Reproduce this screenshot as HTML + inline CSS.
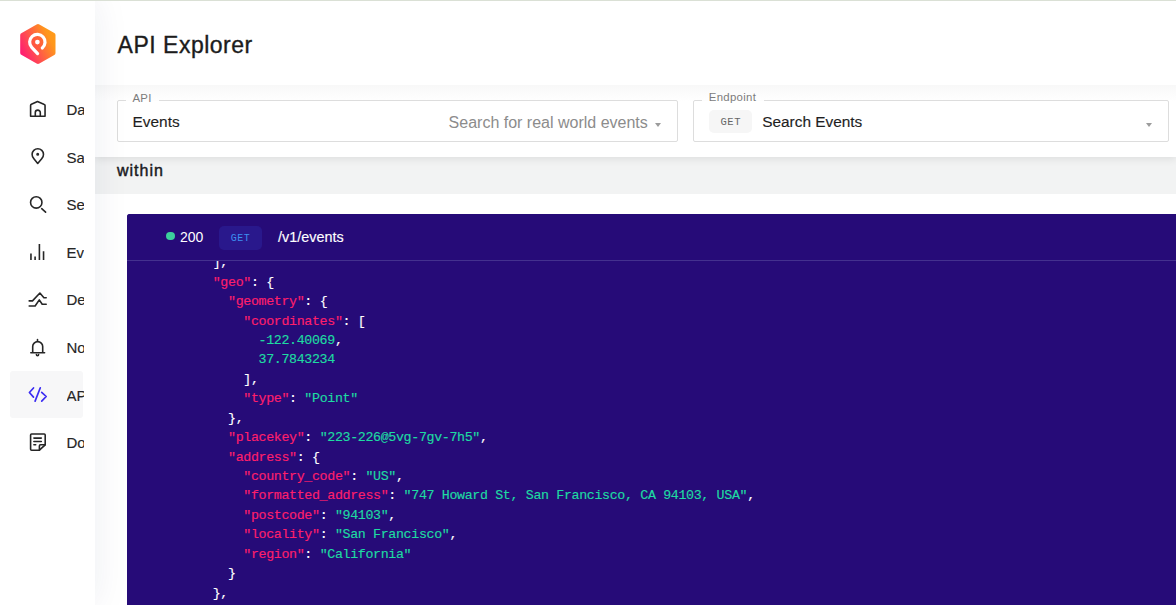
<!DOCTYPE html>
<html><head><meta charset="utf-8">
<style>
*{box-sizing:border-box;margin:0;padding:0}
html,body{width:1176px;height:605px;overflow:hidden;background:#fff;font-family:"Liberation Sans",sans-serif}
.topline{position:absolute;left:0;top:0;width:1176px;height:1px;background:#dae0d5;z-index:50}
#side{position:absolute;left:0;top:0;width:95px;height:605px;background:#fff;z-index:20;box-shadow:0 0 36px rgba(20,35,90,0.08)}
#logo{position:absolute;left:18px;top:22px;width:40px;height:44px}
.item{position:absolute;left:10px;width:73px;height:47px;overflow:hidden;border-radius:3px}
.item.active{background:#f7f7f8}
.item svg{position:absolute;left:17px;top:13px;width:20px;height:20px}
.lab{position:absolute;left:66.5px;width:17.2px;overflow:hidden;font-size:15px;line-height:14px;color:#262626;white-space:nowrap;margin-top:-1.25px;letter-spacing:0px;-webkit-text-stroke:0.15px #262626}
#main{position:absolute;left:95px;top:0;width:1081px;height:605px;background:#fff}
#hdr{position:absolute;left:0;top:0;width:1081px;height:157px;background:#fff;z-index:5;box-shadow:0 2px 8px rgba(0,0,0,0.09)}
#title{position:absolute;left:22.6px;top:31.6px;font-size:23px;color:#1c1c1c;letter-spacing:0.5px;-webkit-text-stroke:0.35px #1c1c1c}
#fields{position:absolute;left:0;top:85px;width:1081px;height:72px;background:linear-gradient(#f8f8f8,#fff 16px)}
#flayer{position:absolute;left:0;top:0;width:1176px;height:605px;z-index:8}
.fbox{position:absolute;border:1px solid #dddddd;border-radius:2px;background:#fff}
.notch{position:absolute;top:100px;height:1px;background:#fdfdfd}
.lbl{position:absolute;font-size:11.4px;line-height:11.4px;color:#7c7c7c;letter-spacing:0.3px;white-space:nowrap}
.val{position:absolute;font-size:15.4px;line-height:15.4px;color:#1f1f1f;white-space:nowrap;-webkit-text-stroke:0.15px #1f1f1f}
.ph{position:absolute;font-size:16px;line-height:16px;color:#8c8c8c;white-space:nowrap}
.arr{position:absolute;width:0;height:0;border-left:3.7px solid transparent;border-right:3.7px solid transparent;border-top:4.4px solid #9c9c9c}
.badge{position:absolute;width:43.2px;height:23px;background:#f6f6f6;border-radius:5px;font-family:"Liberation Mono",monospace;font-size:10.5px;color:#666;text-align:center;line-height:25px;letter-spacing:0.6px}
#band{position:absolute;left:0;top:157px;width:1081px;height:37px;background:#f2f3f3}
#within{position:absolute;left:22px;top:163px;font-size:16px;line-height:16px;color:#1a1a22;z-index:6;-webkit-text-stroke:0.45px #1a1a22;letter-spacing:1px}
#code{position:absolute;left:32px;top:214px;width:1100px;height:420px;background:#260b78;border-radius:3px;overflow:hidden}
#chdr{position:absolute;left:0;top:0;width:100%;height:47px;border-bottom:1px solid #44318f}
.dot{position:absolute;left:39.3px;top:17.7px;width:8.5px;height:8.5px;border-radius:50%;background:#3ccf9c}
.st{position:absolute;left:53px;top:15px;font-size:14px;color:#fff}
.gb{position:absolute;left:92px;top:12px;width:43px;height:24px;background:#29188c;border-radius:5px;font-family:"Liberation Mono",monospace;font-size:10px;color:#3c8ff0;text-align:center;line-height:25px;letter-spacing:0.5px}
.path{position:absolute;left:151px;top:15px;font-size:14.4px;color:#fff;-webkit-text-stroke:0.15px #fff}
#pre{position:absolute;left:55.2px;top:39.2px;font-family:"Liberation Mono",monospace;font-size:13.3px;letter-spacing:-0.345px;line-height:19.43px;color:#fff;white-space:pre;-webkit-text-stroke:0.15px}
.k{color:#ff1f6b}
.s{color:#1edba2}
</style></head><body>
<div class="topline"></div>
<div id="side">
  <svg id="logo" viewBox="0 0 40 44">
    <defs><linearGradient id="lg" x1="0.05" y1="0.75" x2="0.95" y2="0.25"><stop offset="0" stop-color="#ff1d72"/><stop offset="0.5" stop-color="#ff6440"/><stop offset="0.85" stop-color="#ff971c"/><stop offset="1" stop-color="#ff9a1a"/></linearGradient></defs>
    <path d="M18.6 2.4 Q19.3 2 20 2 Q20.7 2 21.4 2.4 L36.3 11 Q37.5 11.7 37.5 13.1 L37.5 30.9 Q37.5 32.3 36.3 33 L21.4 41.6 Q20.7 42 20 42 Q19.3 42 18.6 41.6 L3.7 33 Q2.2 32.3 2.2 30.9 L2.2 13.1 Q2.2 11.7 3.7 11 Z" fill="url(#lg)"/>
    <path d="M19.60 31.60 L13.72 25.31 A7.7 7.7 0 1 1 24.30 25.95 Z" fill="#ff5a3a" opacity="0.55"/>
    <path d="M19.60 31.60 L13.72 25.31 A7.7 7.7 0 1 1 24.30 25.95" fill="none" stroke="#fff" stroke-width="3.2" stroke-linecap="round" stroke-linejoin="round"/>
    <circle cx="19.4" cy="20.1" r="2.35" fill="#fff"/>
  </svg>
  <div class="item active" style="top:371.2px;height:47px"></div>
  <svg id="icons" width="95" height="605" viewBox="0 0 95 605" style="position:absolute;left:0;top:0">
    <g fill="none" stroke="#262626" stroke-width="1.6" stroke-linecap="round" stroke-linejoin="round">
      <path d="M30.6 116.2 V105.6 Q30.6 104.7 31.4 104.3 L37.5 101.6 L43.8 104.3 Q45.05 104.8 45.05 105.6 V116.2 Z"/>
      <path d="M35.3 116.2 V112.6 A2.5 2.5 0 0 1 40.3 112.6 V116.2"/>
      <path d="M37.7 163.4 L33.7 158.4 A5.7 5.7 0 1 1 41.9 158.4 Z"/>
      <circle cx="37.7" cy="154.2" r="0.7" stroke-width="1.6"/>
      <circle cx="36.25" cy="202.45" r="5.7"/>
      <path d="M41.7 208.7 L45.6 212.2"/>
      <path d="M30.95 260 V253.6 M35.1 260 V256.4 M39.4 260 V243.9 M43.55 260 V251.2" stroke-linecap="butt"/>
      <path d="M29.2 300.9 H32.5 L39.9 293 L43.9 297.7 H46.2"/>
      <path d="M29.2 306 H35.1 L39.3 299.9 L42.2 304.3 H46.2"/>
      <path d="M32.7 352.5 V346.6 A5 5 0 0 1 42.7 346.6 V352.5 M30.8 352.7 H44.6 M37.5 339.6 V341.4"/>
      <path d="M36.4 354.6 A1.1 1.1 0 0 0 38.6 354.6" />
      <path d="M30.6 435 Q30.6 434 31.6 434 H44.2 Q45.2 434 45.2 435 V444.8 L39.4 450.2 H31.6 Q30.6 450.2 30.6 449.2 Z"/>
      <path d="M45.2 444.8 H40.5 Q39.4 444.8 39.4 445.9 V450.2"/>
      <path d="M33.9 438.1 H41.3 M33.9 441.5 H41.3 M33.9 444.7 H35.7"/>
    </g>
    <g fill="none" stroke="#3b2cf2" stroke-width="1.7" stroke-linecap="round" stroke-linejoin="round">
      <path d="M33.5 388 L29.4 392.5 L33.5 397.1 M40.3 387.8 L35.1 401.1 M41.7 392.3 L46.2 396.5 L41.7 401.1"/>
    </g>
  </svg>
  <div class="lab" style="top:104.2px">Da</div>
  <div class="lab" style="top:151.8px">Saved</div>
  <div class="lab" style="top:199.4px">Search</div>
  <div class="lab" style="top:247px">Events</div>
  <div class="lab" style="top:294.6px">Deploy</div>
  <div class="lab" style="top:342.2px">Notifications</div>
  <div class="lab" style="top:389.8px">API</div>
  <div class="lab" style="top:437.4px">Docs</div>
</div>
<div id="main">
  <div id="hdr">
    <div id="title">API Explorer</div>
    <div id="fields"></div>
  </div>
  <div id="band"></div>
  <div id="within">within</div>
<div id="code">
    <div id="pre"><span>    ],</span>
    <span class="k">"geo"</span>: {
      <span class="k">"geometry"</span>: {
        <span class="k">"coordinates"</span>: [
          <span class="s">-122.40069</span>,
          <span class="s">37.7843234</span>
        ],
        <span class="k">"type"</span>: <span class="s">"Point"</span>
      },
      <span class="k">"placekey"</span>: <span class="s">"223-226@5vg-7gv-7h5"</span>,
      <span class="k">"address"</span>: {
        <span class="k">"country_code"</span>: <span class="s">"US"</span>,
        <span class="k">"formatted_address"</span>: <span class="s">"747 Howard St, San Francisco, CA 94103, USA"</span>,
        <span class="k">"postcode"</span>: <span class="s">"94103"</span>,
        <span class="k">"locality"</span>: <span class="s">"San Francisco"</span>,
        <span class="k">"region"</span>: <span class="s">"California"</span>
      }
    },</div>
    <div id="chdr" style="background:#260b78">
      <div class="dot"></div>
      <div class="st">200</div>
      <div class="gb">GET</div>
      <div class="path">/v1/events</div>
    </div>
  </div>
</div>
<div id="flayer">
  <div class="fbox" style="left:117px;top:100px;width:561px;height:42px"></div>
  <div class="notch" style="left:126px;width:33px"></div>
  <div class="lbl" style="left:132.4px;top:92.6px">API</div>
  <div class="val" style="left:132.6px;top:113.6px">Events</div>
  <div class="ph" style="left:448.6px;top:114.9px">Search for real world events</div>
  <div class="arr" style="left:655.2px;top:122.8px"></div>
  <div class="fbox" style="left:693px;top:100px;width:476px;height:42px"></div>
  <div class="notch" style="left:702px;width:62px"></div>
  <div class="lbl" style="left:708.8px;top:92.4px">Endpoint</div>
  <div class="badge" style="left:709.2px;top:109.5px">GET</div>
  <div class="val" style="left:762.2px;top:113.6px">Search Events</div>
  <div class="arr" style="left:1146px;top:122.8px"></div>
</div>
</body></html>
